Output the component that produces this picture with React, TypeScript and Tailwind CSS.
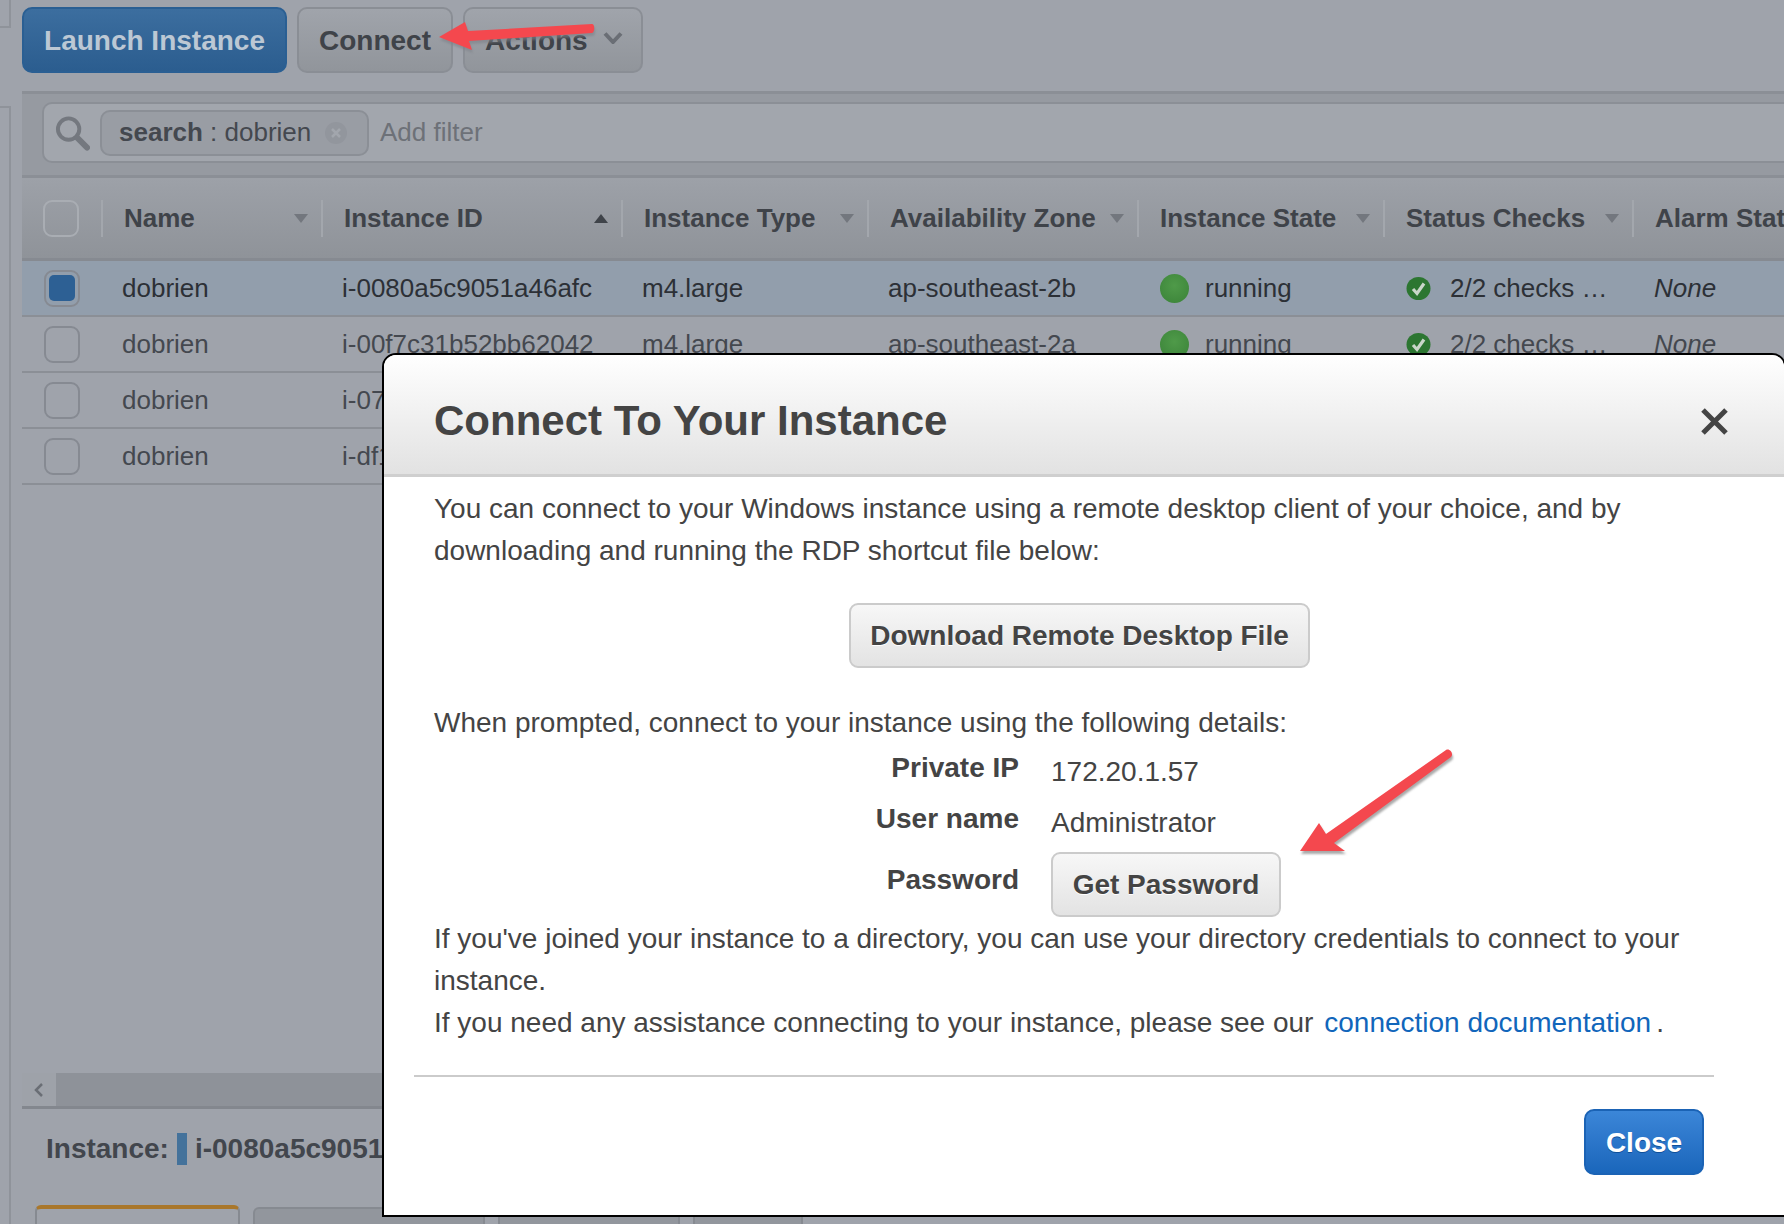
import React from 'react';

const FONT = "font-['Liberation_Sans',Arial,sans-serif]";

const columns = [
  { label: 'Name', width: 'w-[220px]', caret: 'down' },
  { label: 'Instance ID', width: 'w-[300px]', caret: 'up' },
  { label: 'Instance Type', width: 'w-[246px]', caret: 'down' },
  { label: 'Availability Zone', width: 'w-[270px]', caret: 'down' },
  { label: 'Instance State', width: 'w-[246px]', caret: 'down' },
  { label: 'Status Checks', width: 'w-[249px]', caret: 'down' },
];

const rows = [
  { id: 'i-0080a5c9051a46afc', zone: 'ap-southeast-2b', selected: true },
  { id: 'i-00f7c31b52bb62042', zone: 'ap-southeast-2a', selected: false },
  { id: 'i-07f3c1a9d20e4b781', zone: 'ap-southeast-2a', selected: false },
  { id: 'i-df1a20c7', zone: 'ap-southeast-2b', selected: false },
];

function Caret({ up }: { up?: boolean }) {
  return (
    <svg width="14" height="9" viewBox="0 0 14 9" className="shrink-0">
      <path d={up ? 'M7 0L14 9H0Z' : 'M0 0H14L7 9Z'} fill={up ? '#3f4349' : '#73777e'} />
    </svg>
  );
}

function CheckBadge() {
  return (
    <svg width="25" height="23" viewBox="0 0 25 23" className="shrink-0">
      <ellipse cx="12.5" cy="11.5" rx="12" ry="11.5" fill="#2c7631" />
      <path d="M7 12l4 4.5 7-10" fill="none" stroke="#c9d6c9" strokeWidth="3.2" />
    </svg>
  );
}

function Row({ id, zone, selected }: { id: string; zone: string; selected: boolean }) {
  const text = selected ? 'text-[#2c3036]' : 'text-[#44484f]';
  return (
    <div className={`flex h-[56px] shrink-0 items-center border-b-2 border-[#8b8f96] text-[26px] ${text} ${selected ? 'bg-[#929eac]' : ''}`}>
      <div className="flex w-[80px] shrink-0 pl-[22px]">
        <div className="flex h-[37px] w-[36px] items-center justify-center rounded-[9px] border-2 border-[#868a92]">
          {selected && <div className="h-[26px] w-[26px] rounded-[5px] bg-[#2d6094]" />}
        </div>
      </div>
      <div className="w-[220px] shrink-0 pl-[20px]">dobrien</div>
      <div className="w-[300px] shrink-0 pl-[20px] whitespace-nowrap">{id}</div>
      <div className="w-[246px] shrink-0 pl-[20px]">m4.large</div>
      <div className="w-[270px] shrink-0 pl-[20px]">{zone}</div>
      <div className="flex w-[246px] shrink-0 items-center gap-[16px] pl-[22px]">
        <div className="h-[29px] w-[29px] rounded-full bg-[radial-gradient(circle_at_50%_40%,#4f9a49,#3a8238)]" />
        running
      </div>
      <div className="flex w-[249px] shrink-0 items-center gap-[19px] pl-[22px] whitespace-nowrap">
        <CheckBadge />
        2/2 checks …
      </div>
      <div className="pl-[21px] italic">None</div>
    </div>
  );
}

function GrayButton({ label, className }: { label: string; className?: string }) {
  return (
    <button className={`flex items-center justify-center rounded-[9px] border-2 border-[#cbcbcb] bg-gradient-to-b from-[#f7f7f7] to-[#e3e3e3] text-[28px] font-bold text-[#444] [text-shadow:0_1px_0_#fff] ${className ?? ''}`}>
      {label}
    </button>
  );
}

function Modal() {
  return (
    <div className="absolute left-[382px] top-[353px] h-[864px] w-[1404px] rounded-t-[14px] border-2 border-black bg-white text-[28px] leading-[42px] text-[#444]">
      <div className="flex h-[122px] items-center justify-between rounded-t-[12px] border-b-[3px] border-[#cfcfcf] bg-gradient-to-b from-white to-[#e2e2e2] pl-[50px] pr-[56px] pt-[13px]">
        <h1 className="text-[42px] font-bold leading-none text-[#444]">Connect To Your Instance</h1>
        <svg width="27" height="27" viewBox="0 0 27 27">
          <path d="M2 2L25 25M25 2L2 25" stroke="#444" strokeWidth="5" />
        </svg>
      </div>

      <div className="pl-[50px] pt-[11px]">
        <p className="whitespace-nowrap">
          You can connect to your Windows instance using a remote desktop client of your choice, and by
          <br />
          downloading and running the RDP shortcut file below:
        </p>
        <div className="ml-[415px] mt-[31px]">
          <GrayButton label="Download Remote Desktop File" className="h-[65px] w-[461px]" />
        </div>
        <p className="mt-[34px] whitespace-nowrap">When prompted, connect to your instance using the following details:</p>

        <div className="mt-[4px] grid grid-cols-[585px_1fr] gap-x-[32px]">
          <div className="h-[48px] text-right font-bold leading-[40px]">Private IP</div>
          <div className="leading-[48px]">172.20.1.57</div>
          <div className="h-[56px] text-right font-bold leading-[46px]">User name</div>
          <div className="leading-[54px]">Administrator</div>
          <div className="text-right font-bold leading-[56px]">Password</div>
          <GrayButton label="Get Password" className="h-[65px] w-[230px]" />
        </div>

        <p className="mt-[1px] whitespace-nowrap">
          If you've joined your instance to a directory, you can use your directory credentials to connect to your
          <br />
          instance.
          <br />
          If you need any assistance connecting to your instance, please see our{' '}
          <a className="ml-[3px] text-[#1166bb]">connection documentation</a>
          <span className="ml-[5px]">.</span>
        </p>
      </div>

      <div className="ml-[30px] mr-[70px] mt-[31px] h-[2px] bg-[#cbcbcb]" />
      <div className="mt-[32px] flex justify-end pr-[80px]">
        <button className="h-[66px] w-[120px] rounded-[10px] border-2 border-[#1b63b5] bg-gradient-to-b from-[#3b86d8] to-[#1a66bb] pt-[1px] text-[28px] font-bold text-white [text-shadow:0_1px_0_#0f4f99]">
          Close
        </button>
      </div>
    </div>
  );
}

export default function App() {
  return (
    <div className={`relative h-[1224px] w-[1784px] overflow-hidden bg-[#9fa3ab] ${FONT}`}>
      <div className="flex h-full">
        {/* Left nav edge */}
        <div className="w-[22px] shrink-0">
          <div className="h-[28px] w-[11px] border-b-2 border-r-2 border-[#8f939a]" />
          <div className="mt-[78px] h-[1118px] w-[11px] border-r-2 border-t-2 border-[#8f939a]" />
        </div>

        <div className="flex min-w-0 flex-1 flex-col">
          {/* Toolbar */}
          <div className="flex h-[91px] shrink-0 gap-[10px] pt-[7px]">
            <button className="h-[66px] w-[265px] rounded-[10px] border-2 border-[#2a5f93] bg-gradient-to-b from-[#3c6e9f] to-[#2b5d8f] pt-[1px] text-[28px] font-bold text-[#bcc8d4]">
              Launch Instance
            </button>
            <button className="h-[66px] w-[156px] rounded-[10px] border-2 border-[#8a8e95] bg-gradient-to-b from-[#a0a4ab] to-[#91959b] pt-[1px] text-[28px] font-bold text-[#3f4349]">
              Connect
            </button>
            <button className="flex h-[66px] w-[180px] items-center rounded-[10px] border-2 border-[#8a8e95] bg-gradient-to-b from-[#a0a4ab] to-[#91959b] pl-[20px] pt-[1px] text-[28px] font-bold text-[#3f4349]">
              Actions
              <svg width="20" height="12" viewBox="0 0 20 12" className="mb-[6px] ml-[15px]">
                <path d="M2 1.5L10 10l8-8.5" fill="none" stroke="#6a6e75" strokeWidth="4" />
              </svg>
            </button>
          </div>

          {/* Filter bar */}
          <div className="flex h-[87px] shrink-0 border-y-[3px] border-y-[#8b8f96] bg-[#969aa1] pl-[20px] pt-[8px]">
            <div className="flex h-[61px] w-full items-center rounded-l-[10px] border-2 border-r-0 border-[#8b8f96] bg-[#a2a6ad] pl-[11px]">
              <svg width="35" height="36" viewBox="0 0 36 36" className="shrink-0">
                <circle cx="14" cy="14" r="11" fill="none" stroke="#74787f" strokeWidth="4" />
                <path d="M23 23l10 10" stroke="#74787f" strokeWidth="6" strokeLinecap="round" />
              </svg>
              <div className="ml-[10px] flex h-[46px] w-[269px] shrink-0 items-center rounded-[10px] border-2 border-[#8b8f96] bg-[#999da4] pl-[17px] text-[26px] text-[#44484f]">
                <span className="font-bold">search</span>
                <span className="whitespace-pre"> : dobrien</span>
                <svg width="22" height="22" viewBox="0 0 22 22" className="ml-[14px]">
                  <circle cx="11" cy="11" r="11" fill="#92969d" />
                  <path d="M7 7l8 8M15 7l-8 8" stroke="#a2a6ad" strokeWidth="2.5" />
                </svg>
              </div>
              <span className="ml-[11px] text-[26px] text-[#6d7178]">Add filter</span>
            </div>
          </div>

          {/* Table */}
          <div className="flex h-[83px] shrink-0 items-center whitespace-nowrap border-b-[3px] border-[#868a91] bg-gradient-to-b from-[#9da1a8] to-[#8f9399] text-[26px] font-bold text-[#3f4349]">
            <div className="flex h-[37px] w-[79px] shrink-0 items-center pl-[21px]">
              <div className="h-[37px] w-[36px] rounded-[9px] border-2 border-[#a9adb3]" />
            </div>
            {columns.map((col) => (
              <div key={col.label} className={`flex h-[37px] shrink-0 items-center justify-between border-l-2 border-[#a3a7ad] pl-[21px] pr-[13px] ${col.width}`}>
                {col.label}
                <Caret up={col.caret === 'up'} />
              </div>
            ))}
            <div className="flex h-[37px] items-center border-l-2 border-[#a3a7ad] pl-[21px]">Alarm Status</div>
          </div>
          <div className="flex flex-1 flex-col">
            {rows.map((row) => (
              <Row key={row.id} {...row} />
            ))}
          </div>

          {/* Scrollbar */}
          <div className="flex h-[36px] shrink-0 border-b-[3px] border-[#83878e] bg-[#8e9299]">
            <div className="flex w-[34px] items-center justify-center bg-[#9ea2a9]">
              <svg width="10" height="14" viewBox="0 0 10 14">
                <path d="M8 1L2 7l6 6" fill="none" stroke="#6a6e75" strokeWidth="2.5" />
              </svg>
            </div>
          </div>

          {/* Details pane */}
          <div className="flex h-[96px] shrink-0 items-start pl-[24px] pt-[24px] text-[28px] font-bold leading-[32px] text-[#42464d]">
            Instance:
            <span className="ml-[8px] mr-[8px] h-[32px] w-[10px] bg-[#44729b]" />
            i-0080a5c9051a46afc
          </div>
          <div className="flex h-[19px] shrink-0 items-end gap-[13px] pl-[13px]">
            <div className="h-[19px] w-[205px] rounded-t-[6px] border-x-2 border-t-[4px] border-x-[#868a91] border-t-[#a9772b] bg-[#9fa3ab]" />
            <div className="h-[17px] w-[232px] rounded-t-[6px] border-x-2 border-t-2 border-[#868a91] bg-[#92969d]" />
            <div className="h-[17px] w-[182px] rounded-t-[6px] border-x-2 border-t-2 border-[#868a91] bg-[#92969d]" />
            <div className="h-[17px] w-[110px] rounded-t-[6px] border-x-2 border-t-2 border-[#868a91] bg-[#92969d]" />
          </div>
        </div>
      </div>

      <Modal />

      {/* Callout arrows */}
      <svg width="170" height="44" viewBox="0 0 170 44" className="absolute left-[432px] top-[16px]">
        <path d="M7 21L33 6l3 9 124-7c3 0 3 8 0 9L37 25l3 9Z" fill="#7d8188" opacity="0.6" transform="translate(1 3)" className="blur-[1px]" />
        <path d="M7 21L33 6l3 9 124-7c3 0 3 8 0 9L37 25l3 9Z" fill="#f4484e" />
      </svg>
      <svg width="166" height="114" viewBox="0 0 166 114" className="absolute left-[1296px] top-[746px]">
        <path d="M4 105L23 77l7 11L150 4c4-2 8 4 5 7L38 97l11 8Z" fill="#aaaaaa" transform="translate(1 3)" className="blur-[1px]" />
        <path d="M4 105L23 77l7 11L150 4c4-2 8 4 5 7L38 97l11 8Z" fill="#f4484e" />
      </svg>
    </div>
  );
}
